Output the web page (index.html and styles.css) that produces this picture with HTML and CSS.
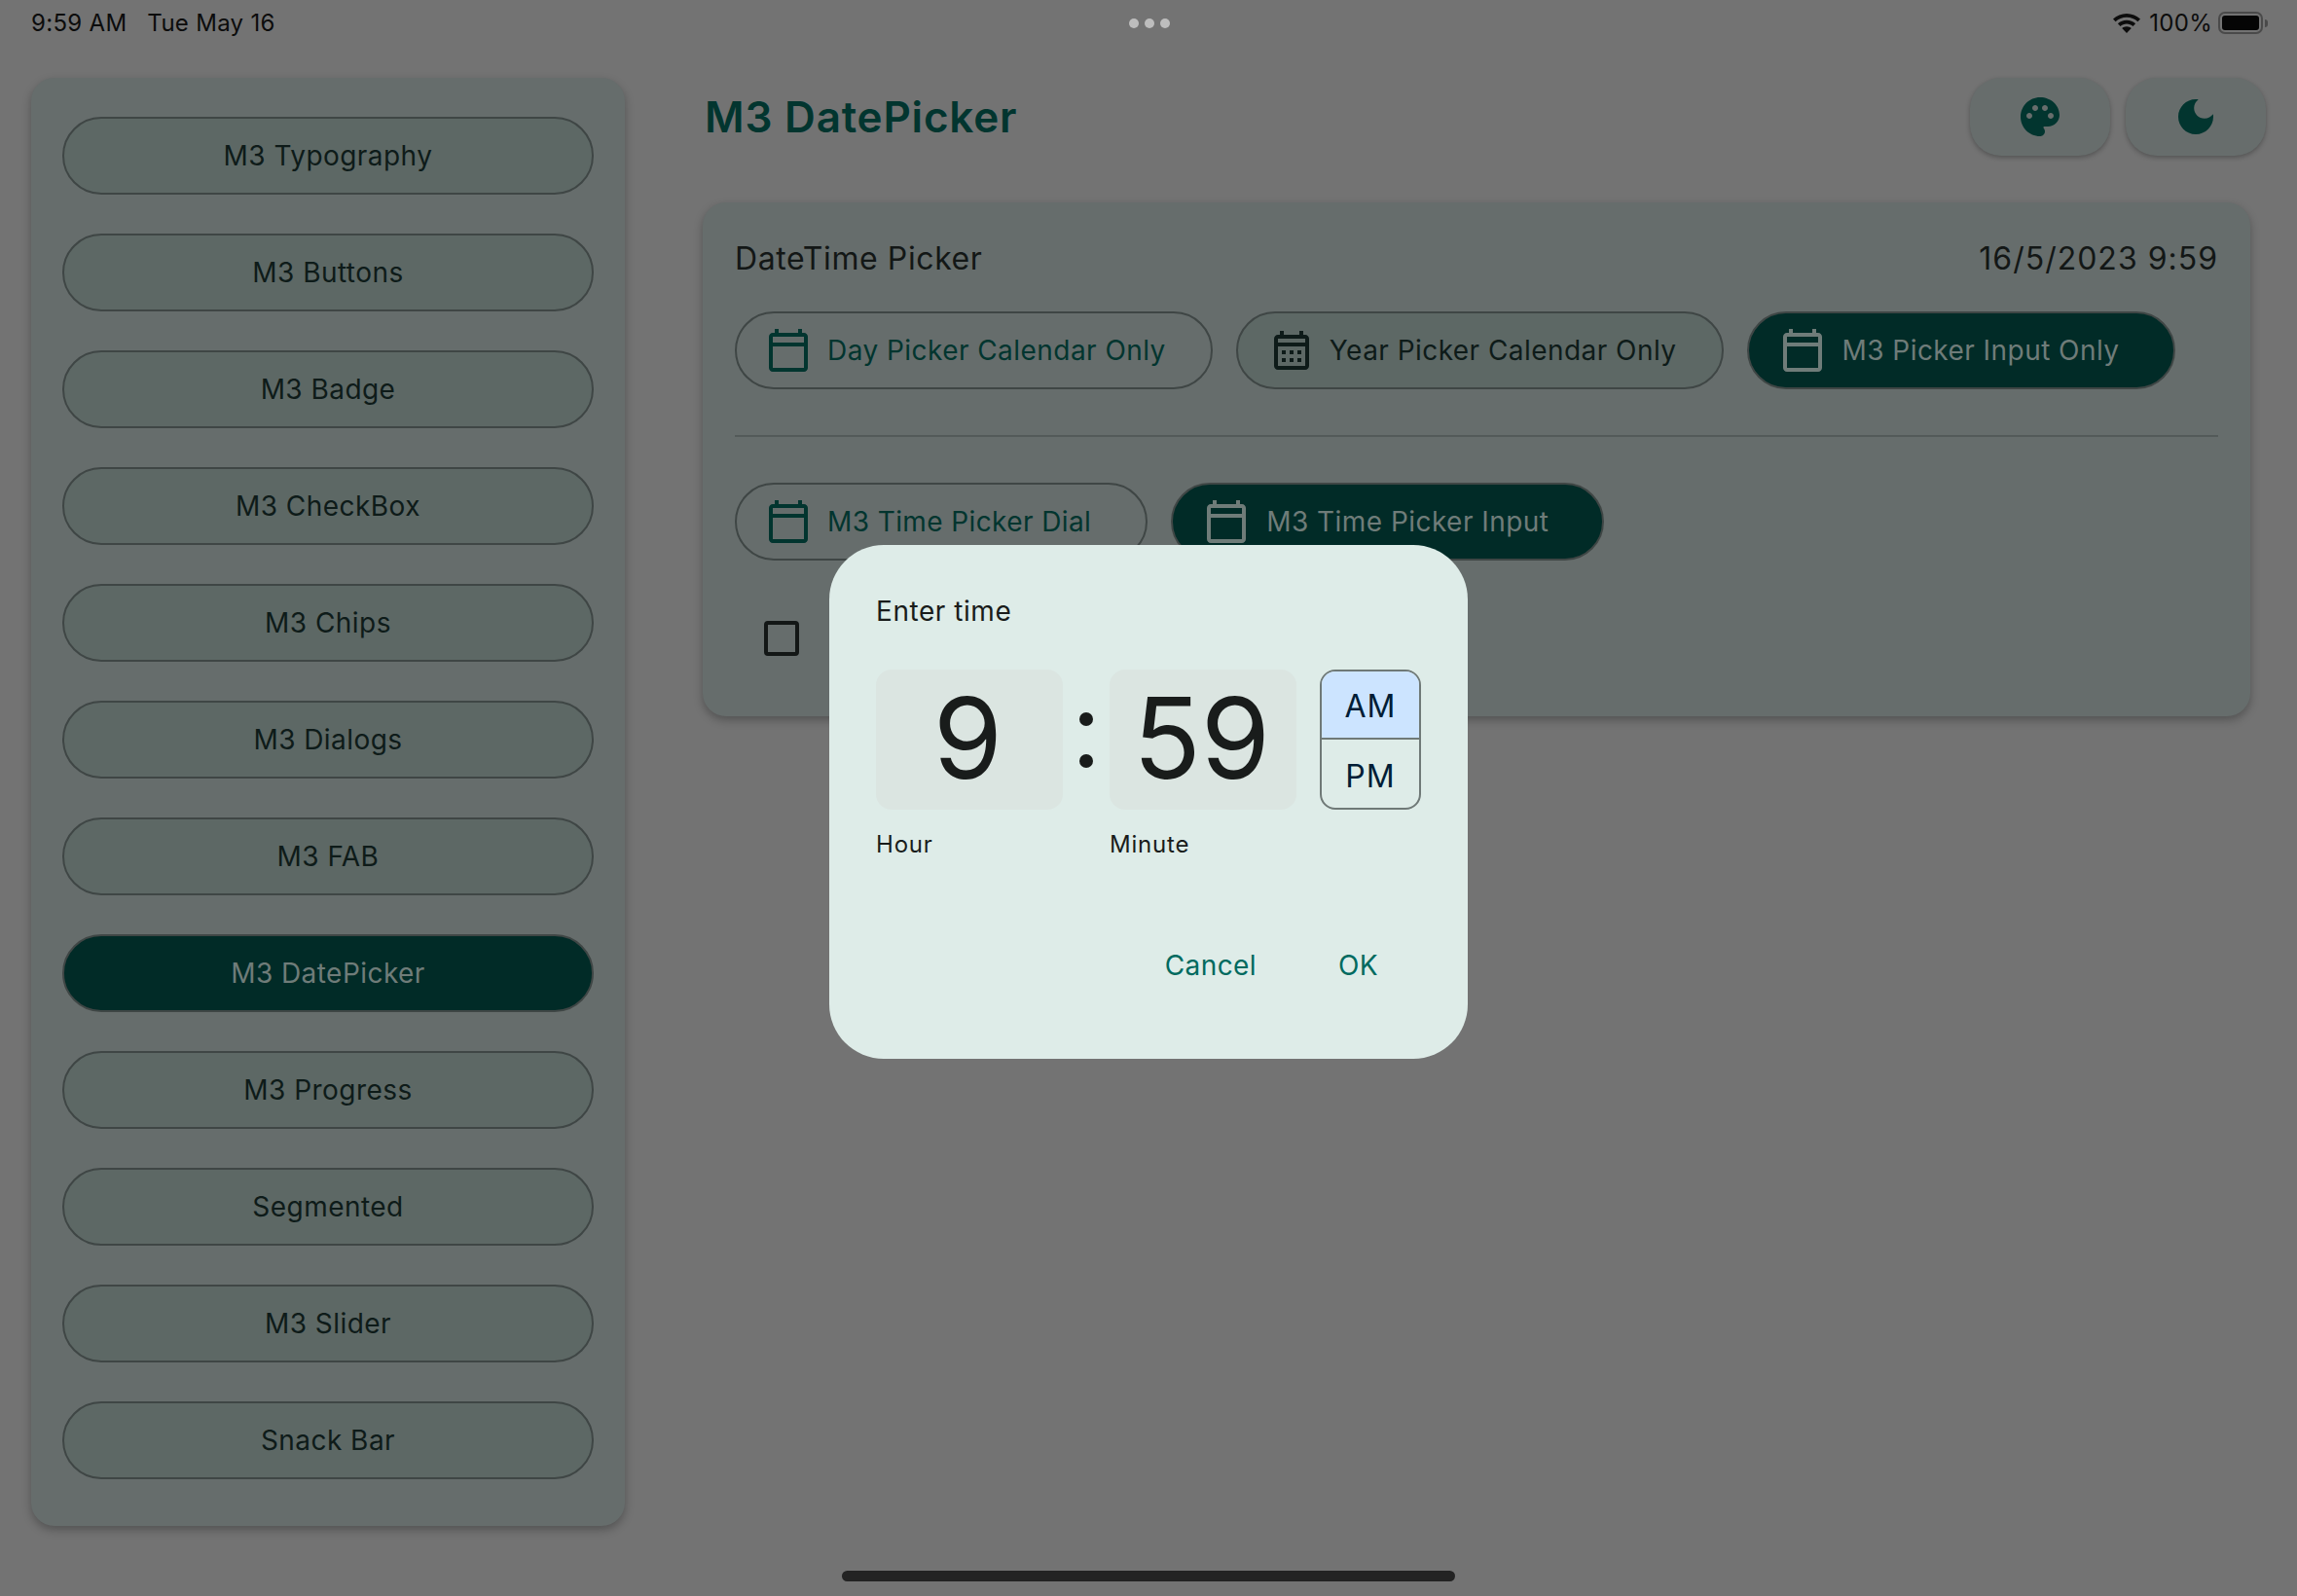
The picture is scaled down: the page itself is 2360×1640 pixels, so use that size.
FILE: index.html
```html
<!doctype html>
<html lang="en">
<head>
    <meta charset="utf-8">
    <meta name="viewport" content="width=device-width, initial-scale=1">
    <title>M3 DatePicker</title>
    <link rel="stylesheet" href="styles.css">
</head>

<body>
    <div class="status">
        <div class="status-left"><span>9:59 AM</span><span>Tue May 16</span></div>
        <div class="status-dots"><i></i><i></i><i></i></div>
        <div class="status-right">
            <svg class="wifi" viewBox="0 0 30 24">
                <path d="M15 2C9.6 2 4.7 4.1 1 7.5l2.6 2.8C6.6 7.5 10.6 5.8 15 5.8s8.4 1.7 11.4 4.5L29 7.5C25.300 4.100 20.400 2 15 2z"/>
                <path d="M15 8.700c-3.500 0-6.700 1.300-9.100 3.500l2.600 2.800c1.700-1.500 4-2.500 6.500-2.500s4.800 1 6.500 2.500l2.600-2.800c-2.400-2.200-5.600-3.500-9.100-3.500z"/>
                <path d="M15 15.200c-1.900 0-3.500.7-4.800 1.800L15 22l4.800-5c-1.300-1.100-2.900-1.800-4.800-1.800z"/>
            </svg>
            <span>100%</span>
            <div class="battery"><div class="battery-fill"></div></div>
            <div class="battery-nub"></div>
        </div>
    </div>

    <div class="main">
        <nav class="sidebar">
            <button class="nav-btn">M3 Typography</button>
            <button class="nav-btn">M3 Buttons</button>
            <button class="nav-btn">M3 Badge</button>
            <button class="nav-btn">M3 CheckBox</button>
            <button class="nav-btn">M3 Chips</button>
            <button class="nav-btn">M3 Dialogs</button>
            <button class="nav-btn">M3 FAB</button>
            <button class="nav-btn active">M3 DatePicker</button>
            <button class="nav-btn">M3 Progress</button>
            <button class="nav-btn">Segmented</button>
            <button class="nav-btn">M3 Slider</button>
            <button class="nav-btn">Snack Bar</button>
        </nav>

        <div class="content">
            <header class="header">
                <h1>M3 DatePicker</h1>
                <div class="header-actions">
                    <button class="fab">
                        <svg class="icon" viewBox="0 0 24 24"><path d="M12 2C6.490 2 2 6.490 2 12s4.490 10 10 10c1.380 0 2.500-1.120 2.500-2.500 0-.610-.230-1.200-.640-1.670-.080-.100-.130-.210-.130-.330 0-.280.220-.500.500-.500H16c3.310 0 6-2.690 6-6 0-4.960-4.490-9-10-9zm5.500 11c-.830 0-1.500-.670-1.500-1.500s.670-1.500 1.500-1.500 1.500.670 1.500 1.500-.670 1.500-1.500 1.500zm-3-4c-.830 0-1.500-.670-1.500-1.500S13.670 6 14.500 6s1.500.670 1.500 1.500S15.330 9 14.500 9zM5 11.500c0-.830.670-1.500 1.500-1.500S8 10.670 8 11.500 7.330 13 6.500 13 5 12.330 5 11.500zm6-4c0 .830-.670 1.500-1.500 1.500S8 8.330 8 7.500 8.670 6 9.500 6s1.500.670 1.500 1.500z"/></svg>
                    </button>
                    <button class="fab">
                        <svg class="icon" viewBox="0 0 24 24"><path d="M12 3c-4.970 0-9 4.030-9 9s4.030 9 9 9 9-4.030 9-9c0-.460-.040-.920-.100-1.360-.980 1.370-2.580 2.260-4.400 2.260-2.980 0-5.400-2.420-5.400-5.400 0-1.810.890-3.420 2.260-4.400-.440-.060-.900-.100-1.360-.100z"/></svg>
                    </button>
                </div>
            </header>

            <section class="card">
                <div class="card-title">
                    <span>DateTime Picker</span>
                    <span class="card-value">16/5/2023 9:59</span>
                </div>

                <div class="pill-row">
                    <button class="pill">
                        <svg class="icon" viewBox="0 0 24 24"><path d="M20 3h-1V1h-2v2H7V1H5v2H4c-1.100 0-2 .900-2 2v16c0 1.100.900 2 2 2h16c1.100 0 2-.900 2-2V5c0-1.100-.900-2-2-2zm0 2v3H4V5h16zM4 21V10h16v11H4z"/></svg>
                        Day Picker Calendar Only
                    </button>
                    <button class="pill tonal">
                        <svg class="icon" viewBox="0 0 24 24"><path d="M19 4h-1V2h-2v2H8V2H6v2H5c-1.110 0-1.990.900-1.990 2L3 20c0 1.100.890 2 2 2h14c1.100 0 2-.900 2-2V6c0-1.100-.900-2-2-2zm0 16H5V10h14v10zm0-12H5V6h14v2zM9 14H7v-2h2v2zm4 0h-2v-2h2v2zm4 0h-2v-2h2v2zm-8 4H7v-2h2v2zm4 0h-2v-2h2v2zm4 0h-2v-2h2v2z"/></svg>
                        Year Picker Calendar Only
                    </button>
                    <button class="pill filled">
                        <svg class="icon" viewBox="0 0 24 24"><path d="M20 3h-1V1h-2v2H7V1H5v2H4c-1.100 0-2 .900-2 2v16c0 1.100.900 2 2 2h16c1.100 0 2-.900 2-2V5c0-1.100-.900-2-2-2zm0 2v3H4V5h16zM4 21V10h16v11H4z"/></svg>
                        M3 Picker Input Only
                    </button>
                </div>

                <div class="divider"></div>

                <div class="pill-row">
                    <button class="pill wide">
                        <svg class="icon" viewBox="0 0 24 24"><path d="M20 3h-1V1h-2v2H7V1H5v2H4c-1.100 0-2 .900-2 2v16c0 1.100.900 2 2 2h16c1.100 0 2-.900 2-2V5c0-1.100-.900-2-2-2zm0 2v3H4V5h16zM4 21V10h16v11H4z"/></svg>
                        M3 Time Picker Dial
                    </button>
                    <button class="pill filled">
                        <svg class="icon" viewBox="0 0 24 24"><path d="M20 3h-1V1h-2v2H7V1H5v2H4c-1.100 0-2 .900-2 2v16c0 1.100.900 2 2 2h16c1.100 0 2-.900 2-2V5c0-1.100-.900-2-2-2zm0 2v3H4V5h16zM4 21V10h16v11H4z"/></svg>
                        M3 Time Picker Input
                    </button>
                </div>

                <div class="check-row"><div class="checkbox"></div></div>
            </section>
        </div>
    </div>

    <div class="home-bar"></div>

    <div class="dialog-layer">
        <div class="dialog">
            <div class="dialog-title">Enter time</div>
            <div class="time-row">
                <div class="time-col">
                    <div class="time-field">9</div>
                    <div class="time-label">Hour</div>
                </div>
                <div class="colon"><i></i><i></i></div>
                <div class="time-col">
                    <div class="time-field">59</div>
                    <div class="time-label">Minute</div>
                </div>
                <div class="ampm">
                    <div class="ampm-item selected">AM</div>
                    <div class="ampm-item">PM</div>
                </div>
            </div>
            <div class="dialog-actions">
                <span>Cancel</span>
                <span>OK</span>
            </div>
        </div>
    </div>
</body>

</html>
```

FILE: styles.css
```css
html {
    width: 100%;
    height: 100%;
}

body {
    margin: 0;
    width: 2360px;
    height: 1640px;
    overflow: hidden;
    font-family: Inter, sans-serif;
    background-color: #737373;
    color: #131716;
}

button {
    font-family: inherit;
    cursor: pointer;
}

.icon {
    width: 48px;
    height: 48px;
    flex: none;
    fill: currentColor;
}

/* status bar */
.status {
    height: 46px;
    padding: 1px 30px 0 32px;
    box-sizing: border-box;
    display: grid;
    grid-template-columns: 1fr auto 1fr;
    align-items: center;
    font-size: 24px;
    letter-spacing: .3px;
    color: #0c0c0c;
}

.status-left {
    display: flex;
    gap: 21px;
}

.status-dots {
    display: flex;
    gap: 6px;
}

.status-dots i {
    width: 10px;
    height: 10px;
    border-radius: 50%;
    background-color: #bdbdbd;
}

.status-right {
    display: flex;
    justify-content: flex-end;
    align-items: center;
}

.wifi {
    width: 30px;
    height: 24px;
    margin-right: 8px;
    fill: #0c0c0c;
}

.battery {
    width: 46px;
    height: 23px;
    margin-left: 6px;
    padding: 2px;
    box-sizing: border-box;
    border: 2px solid #4a4a4a;
    border-radius: 7px;
}

.battery-fill {
    height: 100%;
    border-radius: 3px;
    background-color: #050505;
}

.battery-nub {
    width: 3px;
    height: 8px;
    margin-left: 2px;
    border-radius: 0 3px 3px 0;
    background-color: #4a4a4a;
}

/* page */
.main {
    display: flex;
    gap: 80px;
    padding: 34px 32px 0;
}

.sidebar {
    width: 610px;
    height: 1488px;
    box-sizing: border-box;
    padding: 40px 32px 0;
    display: flex;
    flex-direction: column;
    gap: 40px;
    border-radius: 24px;
    background-color: #666d6c;
    box-shadow: 0 4px 10px rgba(0, 0, 0, .28);
}

.nav-btn {
    height: 80px;
    flex: none;
    padding: 0;
    border: 2px solid #3f4645;
    border-radius: 40px;
    background-color: #5d6865;
    color: #0e1b19;
    font-size: 28px;
    letter-spacing: .45px;
}

.nav-btn.active {
    background-color: #012b27;
    color: #6f7c79;
}

.content {
    flex: 1;
}

.header {
    height: 80px;
    margin-bottom: 48px;
    display: flex;
    align-items: center;
    justify-content: space-between;
}

.header h1 {
    margin: 0 0 0 2px;
    font-size: 44px;
    font-weight: 600;
    letter-spacing: .8px;
    color: #02352f;
}

.header-actions {
    display: flex;
    gap: 16px;
}

.fab {
    width: 144px;
    height: 80px;
    display: flex;
    align-items: center;
    justify-content: center;
    border: 0;
    border-radius: 32px;
    background-color: #676d6c;
    color: #02352f;
    box-shadow: 0 2px 5px rgba(0, 0, 0, .28);
}

.card {
    height: 528px;
    margin-right: 16px;
    box-sizing: border-box;
    padding: 37px 33px 0;
    border-radius: 24px;
    background-color: #666d6c;
    box-shadow: 0 4px 10px rgba(0, 0, 0, .28);
}

.card-title {
    height: 40px;
    margin-bottom: 35px;
    display: flex;
    align-items: center;
    justify-content: space-between;
    font-size: 32px;
    letter-spacing: .6px;
}

.card-value {
    letter-spacing: 1px;
}

.pill-row {
    display: flex;
    gap: 24px;
}

.pill {
    height: 80px;
    padding: 0 46px 0 29px;
    display: flex;
    align-items: center;
    gap: 16px;
    border: 2px solid #3f4645;
    border-radius: 40px;
    background-color: transparent;
    color: #02352f;
    font-size: 28px;
    letter-spacing: .45px;
    white-space: nowrap;
}

.pill.wide {
    padding-right: 56px;
    letter-spacing: .4px;
}

.pill.tonal {
    padding-left: 31px;
    gap: 15px;
    background-color: #5d6865;
    color: #0e1b19;
}

.pill.filled {
    padding: 0 55px 0 31px;
    gap: 17px;
    background-color: #012b27;
    color: #6f7c79;
}

.divider {
    height: 2px;
    margin: 47px 0;
    background-color: #535a59;
}

.check-row {
    margin-top: 62px;
    padding-left: 30px;
}

.checkbox {
    width: 36px;
    height: 36px;
    box-sizing: border-box;
    border: 4px solid #131716;
    border-radius: 4px;
}

.home-bar {
    position: absolute;
    left: 865px;
    top: 1614px;
    width: 630px;
    height: 11px;
    border-radius: 6px;
    background-color: #232323;
}

/* time picker dialog */
.dialog-layer {
    position: absolute;
    top: 0;
    left: 0;
    width: 2360px;
    height: 1640px;
    padding-top: 8px;
    box-sizing: border-box;
    display: flex;
    align-items: center;
    justify-content: center;
}

.dialog {
    width: 656px;
    height: 528px;
    box-sizing: border-box;
    padding: 48px;
    display: flex;
    flex-direction: column;
    border-radius: 56px;
    background-color: #deece8;
    color: #191c1b;
}

.dialog-title {
    height: 40px;
    margin-bottom: 40px;
    display: flex;
    align-items: center;
    font-size: 28px;
    letter-spacing: .55px;
}

.time-row {
    display: flex;
}

.time-field {
    width: 192px;
    height: 144px;
    box-sizing: border-box;
    padding: 0 3px 3px 0;
    display: flex;
    align-items: center;
    justify-content: center;
    border-radius: 16px;
    background-color: #dbe5e1;
    font-size: 115px;
}

.time-label {
    margin-top: 21px;
    font-size: 24px;
    letter-spacing: .8px;
}

.colon {
    width: 48px;
    height: 144px;
    display: flex;
    flex-direction: column;
    align-items: center;
    justify-content: center;
    gap: 29px;
}

.colon i {
    width: 14px;
    height: 14px;
    border-radius: 50%;
    background-color: #191c1b;
}

.ampm {
    width: 104px;
    height: 144px;
    margin-left: 24px;
    box-sizing: border-box;
    display: flex;
    flex-direction: column;
    border: 2px solid #6f7977;
    border-radius: 16px;
    overflow: hidden;
}

.ampm-item {
    flex: 1;
    padding-top: 3px;
    display: flex;
    align-items: center;
    justify-content: center;
    font-size: 32px;
    letter-spacing: 1px;
    color: #001d36;
}

.ampm-item + .ampm-item {
    padding-top: 5px;
}

.ampm-item.selected {
    border-bottom: 2px solid #6f7977;
    background-color: #cce4ff;
}

.dialog-actions {
    margin-top: auto;
    margin-bottom: 31px;
    margin-right: 44px;
    display: flex;
    justify-content: flex-end;
    gap: 84px;
    font-size: 28px;
    letter-spacing: .4px;
    color: #006a5f;
}
```
